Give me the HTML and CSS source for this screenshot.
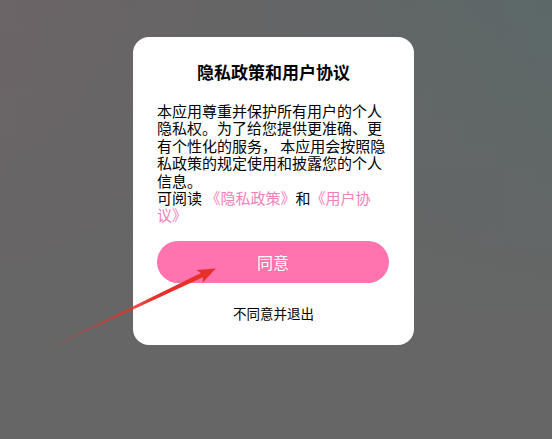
FILE: index.html
```html
<!DOCTYPE html>
<html lang="zh">
<head>
<meta charset="utf-8">
<link rel="stylesheet" href="styles.css">
</head>
<body>
<div class="screen">
  <div class="card">
    <div class="title">隐私政策和用户协议</div>
    <div class="text">本应用尊重并保护所有用户的个人隐私权。为了给您提供更准确、更有个性化的服务， 本应用会按照隐私政策的规定使用和披露您的个人信息。<br>可阅读 <span class="link">《隐私政策》</span>和<span class="link">《用户协议》</span></div>
    <div class="agree">同意</div>
    <div class="reject">不同意并退出</div>
  </div>
  <svg class="arrow" width="552" height="439" viewBox="0 0 552 439">
    <defs>
      <linearGradient id="fade" gradientUnits="userSpaceOnUse" x1="0" y1="0" x2="140" y2="0">
        <stop offset="0" stop-color="#e8302a" stop-opacity="0"/>
        <stop offset="1" stop-color="#e8302a" stop-opacity="1"/>
      </linearGradient>
    </defs>
    <g transform="translate(28 358) rotate(-25.45)">
      <polygon points="0,0 195,-2.4 195,2.4" fill="url(#fade)"/>
      <polygon points="190,-7 208,0 190,7 194,0" fill="#e8302a"/>
    </g>
  </svg>
</div>
</body>
</html>
```
FILE: styles.css
```css
html, body {
  margin: 0;
  padding: 0;
}
body {
  font-family: "Noto Sans CJK SC", "Noto Sans", sans-serif;
}
.screen {
  position: relative;
  width: 552px;
  height: 439px;
  overflow: hidden;
  background:
    linear-gradient(to bottom, rgba(102, 102, 102, 0) 0%, #666666 75%),
    linear-gradient(to right, #6c6466 0%, #646566 50%, #5c6868 100%);
  padding: 37px 0 0 133px;
  box-sizing: border-box;
}
.card {
  width: 281px;
  height: 308px;
  box-sizing: border-box;
  background: #fff;
  border-radius: 16px;
  padding: 23px 24px 0 24px;
  display: flex;
  flex-direction: column;
}
.title {
  font-size: 17px;
  font-weight: 700;
  line-height: 24px;
  text-align: center;
  color: #000;
}
.text {
  margin-top: 18px;
  font-size: 15px;
  line-height: 17.4px;
  color: #000;
}
.link {
  color: #f280b8;
}
.agree {
  margin-top: 17px;
  width: 232px;
  height: 42px;
  border-radius: 21px;
  background: #ff73ae;
  color: #fff;
  font-size: 16px;
  line-height: 42px;
  text-align: center;
}
.reject {
  margin-top: 20px;
  font-size: 13.5px;
  line-height: 20px;
  text-align: center;
  color: #000;
}
.arrow {
  position: absolute;
  left: 0;
  top: 0;
  pointer-events: none;
}
```
